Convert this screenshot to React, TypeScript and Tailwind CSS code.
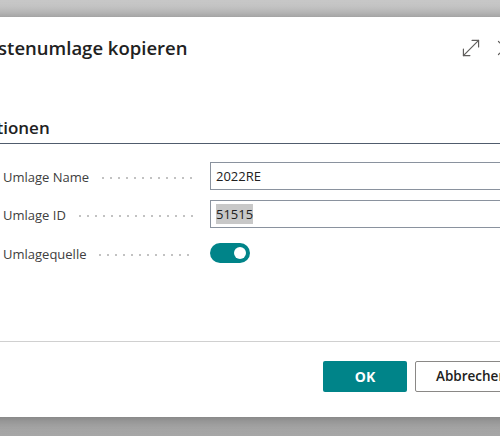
import { MoveDiagonal, X } from "lucide-react";

const font = { fontFamily: '"Open Sans", "Noto Sans", sans-serif' };

const Leader = () => (
  <span className="ml-[10px] h-[4px] flex-1 bg-[radial-gradient(circle,#c2c2c2_1px,transparent_1.4px)] bg-[length:8px_4px] bg-repeat-x" />
);

const FieldRow = ({ label, children }: { label: string; children: React.ReactNode }) => (
  <div className="flex items-center">
    <div className="flex w-[192px] items-center pt-[3px] text-[13px] text-[#404040]">
      <span className="whitespace-nowrap">{label}</span>
      <Leader />
    </div>
    <div className="ml-[15px]">{children}</div>
  </div>
);

export default function App() {
  return (
    <div
      className="h-[436px] w-[500px] overflow-hidden bg-gradient-to-b from-[#c8c8c8] to-[#a6a6a6] pt-[17px]"
      style={font}
    >
      <div className="-ml-[24px] flex h-[400px] w-[560px] flex-col bg-white shadow-[0_0_14px_rgba(0,0,0,0.35)]">
        {/* header */}
        <div className="flex items-center pr-[18px] pt-[17px]">
          <h1 className="-ml-[1px] flex-1 whitespace-nowrap text-[18.5px] font-semibold leading-[28px] text-[#212121]">
            Kostenumlage kopieren
          </h1>
          <div className="flex items-center gap-[8px] text-[#605e5c]">
            <MoveDiagonal size={26} strokeWidth={1.1} />
            <X size={26} strokeWidth={1.1} />
          </div>
        </div>

        {/* group */}
        <div className="mt-[54px] border-b border-[#505c6d] pb-[3px]">
          <h2 className="-ml-[3.5px] text-[17px] font-semibold leading-[24px] text-[#212121]">Optionen</h2>
        </div>

        <div className="mt-[18px] flex flex-col gap-[10px] pl-[27px]">
          <FieldRow label="Umlage Name">
            <input
              readOnly
              value="2022RE"
              className="h-[28px] w-[300px] border border-[#8a929e] px-[5px] text-[13px] text-[#212121] outline-none"
            />
          </FieldRow>
          <FieldRow label="Umlage ID">
            <div className="flex h-[28px] w-[300px] items-center border border-[#8a929e] px-[5px] text-[13px] text-[#212121]">
              <span className="bg-[#c8c8c8] leading-[20px]">51515</span>
            </div>
          </FieldRow>
          <div className="mt-[4px]">
            <FieldRow label="Umlagequelle">
              <div className="flex h-[20px] w-[40px] items-center justify-end rounded-full bg-[#008489] pr-[4px]">
                <span className="h-[12px] w-[12px] rounded-full bg-white" />
              </div>
            </FieldRow>
          </div>
        </div>

        {/* footer */}
        <div className="mt-auto border-t border-[#d0d0d0] pb-[25px] pt-[19px]">
          <div className="flex gap-[8px] pl-[347px]">
            <button className="h-[31px] w-[84px] rounded-[2px] bg-[#008489] text-[14px] font-bold text-white">
              OK
            </button>
            <button className="h-[31px] rounded-[2px] border border-[#8a8886] px-[20px] text-[13.5px] font-semibold text-[#212121]">
              Abbrechen
            </button>
          </div>
        </div>
      </div>
    </div>
  );
}
